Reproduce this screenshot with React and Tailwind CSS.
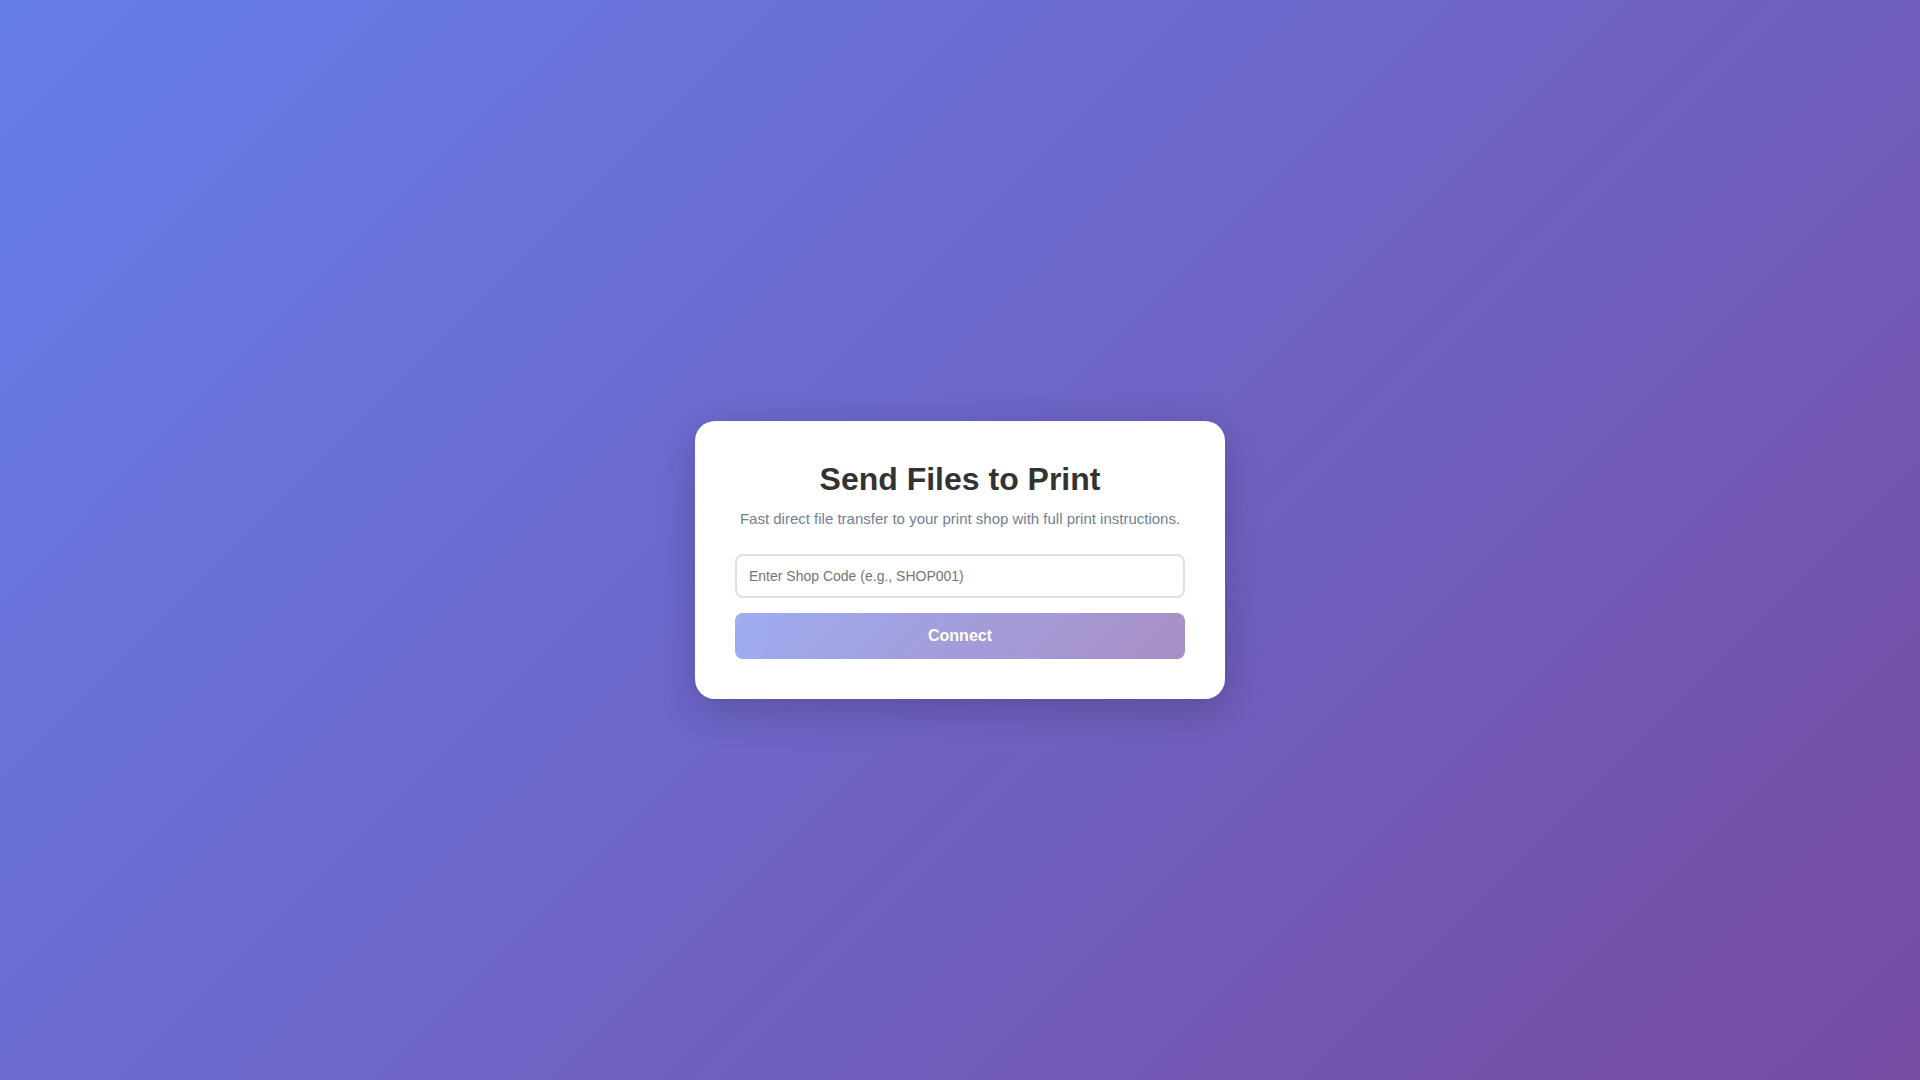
export default function App() {
  return (
    <div
      className="flex min-h-screen items-center justify-center bg-[linear-gradient(135deg,#667eea_0%,#764ba2_100%)] pt-10"
      style={{ fontFamily: '"Liberation Sans", Arial, sans-serif' }}
    >
      <div className="w-[530px] rounded-[20px] bg-white p-10 text-center shadow-[0_10px_40px_rgba(0,0,0,0.2)]">
        <h1 className="mb-3 text-[32px] font-bold leading-[normal] text-[#333]">Send Files to Print</h1>
        <p className="mb-[27px] text-[15px] leading-[normal] text-[#718096]">
          Fast direct file transfer to your print shop with full print instructions.
        </p>
        <input
          type="text"
          placeholder="Enter Shop Code (e.g., SHOP001)"
          className="block w-full rounded-lg border-2 border-[#e0e0e0] bg-white p-3 text-left text-sm leading-[normal] text-[#333] outline-none placeholder:text-[#757575]"
        />
        <button
          disabled
          className="mt-[15px] block w-full rounded-lg bg-[linear-gradient(135deg,#667eea_0%,#764ba2_100%)] py-3.5 text-base font-bold leading-[normal] text-white opacity-[0.63]"
        >
          Connect
        </button>
      </div>
    </div>
  )
}
